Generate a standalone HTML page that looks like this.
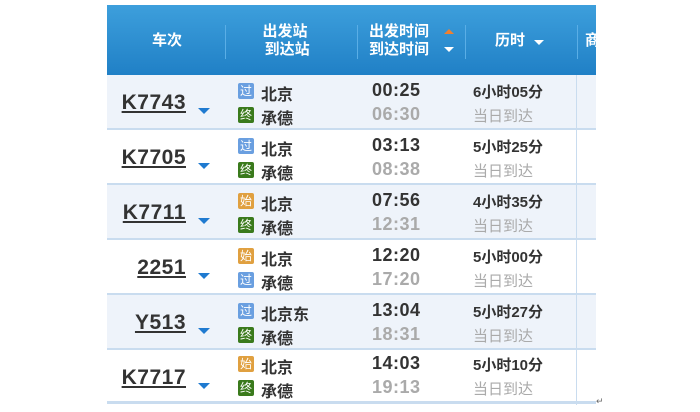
<!DOCTYPE html>
<html><head><meta charset="utf-8"><style>
*{margin:0;padding:0;box-sizing:border-box}
body{width:700px;height:412px;background:#fff;position:relative;overflow:hidden;font-family:"Liberation Sans","Noto Sans CJK SC",sans-serif;}
.hdr{position:absolute;left:107px;top:5px;width:489px;height:70px;background:linear-gradient(#3d9fdc,#2080c6);color:#fff;font-weight:bold;font-size:15px}
.hdr .c{position:absolute;text-align:center;line-height:18px}
.sep{position:absolute;top:20px;width:1px;height:34px;background:#1a5f96;border-right:1px solid #5aaee6}
.row{position:absolute;left:107px;width:489px;height:55px;border-bottom:2px solid #c9dcef}
.odd{background:#eef3fa}
.vl{position:absolute;left:576px;top:75px;width:1px;height:330px;background:#c9dcef;z-index:5}
.tn{position:absolute;right:410px;top:16px;font-size:21px;font-weight:bold;color:#333;text-decoration:underline;letter-spacing:0.5px}
.ar{position:absolute;left:91px;top:33px;width:0;height:0;border-left:6px solid transparent;border-right:6px solid transparent;border-top:6px solid #1f7ad0}
.ic{position:absolute;left:131px;width:16px;height:16px;color:#fff;font-size:12px;line-height:16px;text-align:center;border-radius:2px}
.g{background:#6a9fe0}.z{background:#3a7a1c}.s{background:#e0a040}
.st{position:absolute;left:154px;font-size:16px;font-weight:bold;color:#333}
.t{position:absolute;left:265px;font-size:18px;font-weight:bold;letter-spacing:0.5px}
.d{position:absolute;left:366px;font-size:15px}
</style></head><body>
<div class="hdr">
<div class="c" style="left:30px;top:27px;width:60px">车次</div>
<div class="sep" style="left:118px"></div>
<div class="c" style="left:138px;top:18px;width:80px">出发站<br>&nbsp;到达站</div>
<div class="sep" style="left:250px"></div>
<div class="c" style="left:262px;top:18px;width:80px;text-align:left">出发时间<br>到达时间</div>
<div style="position:absolute;left:337px;top:24px;border-left:5px solid transparent;border-right:5px solid transparent;border-bottom:5px solid #f08030"></div>
<div style="position:absolute;left:337px;top:42px;border-left:5px solid transparent;border-right:5px solid transparent;border-top:5px solid #fff"></div>
<div class="sep" style="left:358px"></div>
<div class="c" style="left:388px;top:27px;width:60px;text-align:left">历时</div>
<div style="position:absolute;left:427px;top:35px;border-left:5px solid transparent;border-right:5px solid transparent;border-top:5px solid #fff"></div>
<div class="sep" style="left:470px"></div>
<div class="c" style="left:478px;top:27px;width:20px;overflow:hidden;text-align:left">商</div>
</div>

<div class="row odd" style="top:75px"><span class="tn">K7743</span><div class="ar"></div>
<div class="ic g" style="top:8px">过</div><div class="st" style="top:6px">北京</div>
<div class="ic z" style="top:32px">终</div><div class="st" style="top:30px">承德</div>
<div class="t" style="top:5px;color:#333">00:25</div><div class="t" style="top:29px;color:#aaa">06:30</div>
<div class="d" style="top:6px;font-weight:bold;color:#333">6小时05分</div><div class="d" style="top:30px;color:#aaa">当日到达</div></div>

<div class="row" style="top:130px"><span class="tn">K7705</span><div class="ar"></div>
<div class="ic g" style="top:8px">过</div><div class="st" style="top:6px">北京</div>
<div class="ic z" style="top:32px">终</div><div class="st" style="top:30px">承德</div>
<div class="t" style="top:5px;color:#333">03:13</div><div class="t" style="top:29px;color:#aaa">08:38</div>
<div class="d" style="top:6px;font-weight:bold;color:#333">5小时25分</div><div class="d" style="top:30px;color:#aaa">当日到达</div></div>

<div class="row odd" style="top:185px"><span class="tn">K7711</span><div class="ar"></div>
<div class="ic s" style="top:8px">始</div><div class="st" style="top:6px">北京</div>
<div class="ic z" style="top:32px">终</div><div class="st" style="top:30px">承德</div>
<div class="t" style="top:5px;color:#333">07:56</div><div class="t" style="top:29px;color:#aaa">12:31</div>
<div class="d" style="top:6px;font-weight:bold;color:#333">4小时35分</div><div class="d" style="top:30px;color:#aaa">当日到达</div></div>

<div class="row" style="top:240px"><span class="tn">2251</span><div class="ar"></div>
<div class="ic s" style="top:8px">始</div><div class="st" style="top:6px">北京</div>
<div class="ic g" style="top:32px">过</div><div class="st" style="top:30px">承德</div>
<div class="t" style="top:5px;color:#333">12:20</div><div class="t" style="top:29px;color:#aaa">17:20</div>
<div class="d" style="top:6px;font-weight:bold;color:#333">5小时00分</div><div class="d" style="top:30px;color:#aaa">当日到达</div></div>

<div class="row odd" style="top:295px"><span class="tn">Y513</span><div class="ar"></div>
<div class="ic g" style="top:8px">过</div><div class="st" style="top:6px">北京东</div>
<div class="ic z" style="top:32px">终</div><div class="st" style="top:30px">承德</div>
<div class="t" style="top:5px;color:#333">13:04</div><div class="t" style="top:29px;color:#aaa">18:31</div>
<div class="d" style="top:6px;font-weight:bold;color:#333">5小时27分</div><div class="d" style="top:30px;color:#aaa">当日到达</div></div>

<div class="row" style="top:350px;height:54px;border-bottom:3px solid #c9dcef"><span class="tn">K7717</span><div class="ar"></div>
<div class="ic s" style="top:6px">始</div><div class="st" style="top:4px">北京</div>
<div class="ic z" style="top:30px">终</div><div class="st" style="top:28px">承德</div>
<div class="t" style="top:3px;color:#333">14:03</div><div class="t" style="top:27px;color:#aaa">19:13</div>
<div class="d" style="top:4px;font-weight:bold;color:#333">5小时10分</div><div class="d" style="top:28px;color:#aaa">当日到达</div></div>
<div class="vl"></div>
<div style="position:absolute;left:596px;top:396px;font-size:9px;color:#666">↵</div>
</body></html>
